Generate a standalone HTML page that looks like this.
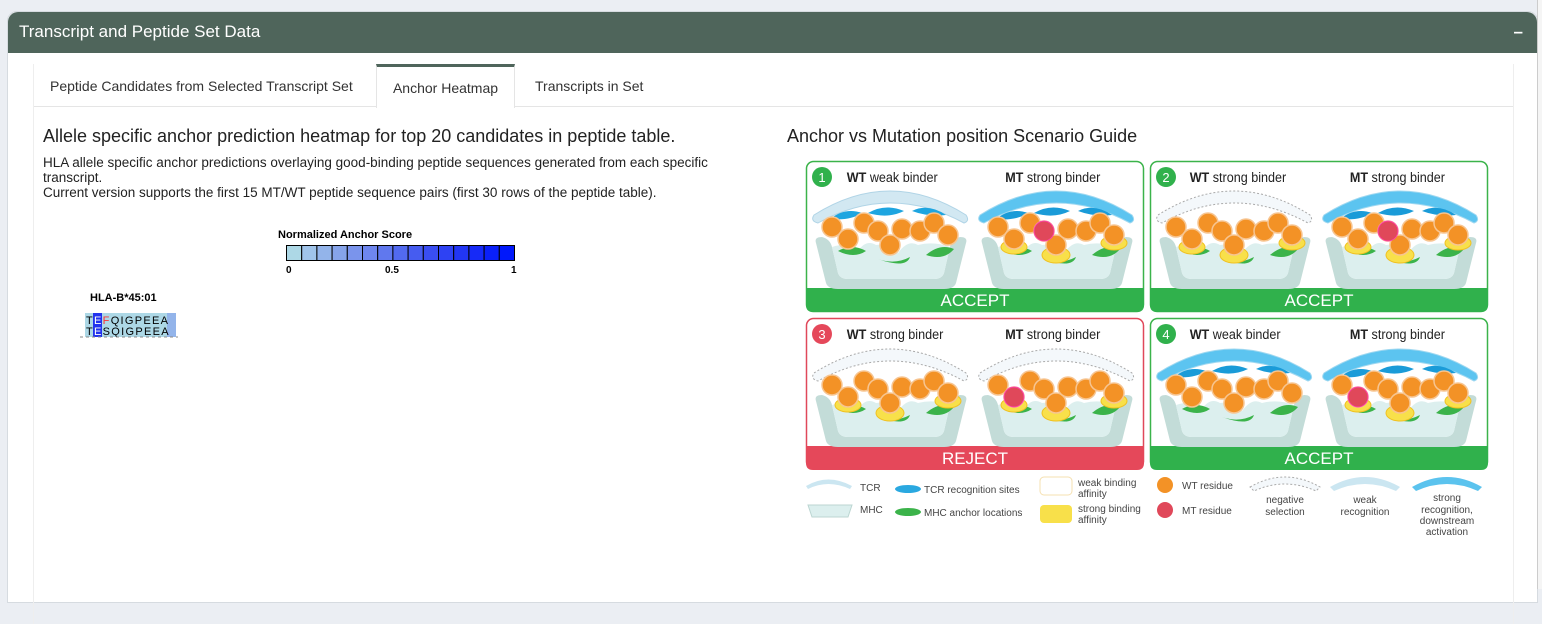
<!DOCTYPE html>
<html><head><meta charset="utf-8"><style>
body{margin:0;width:1542px;height:589px;background:#ebeef3;font-family:"Liberation Sans",sans-serif;overflow:hidden;position:relative}
.box{position:absolute;left:7px;top:11px;width:1529px;height:590px;background:#fff;border-radius:10px 10px 0 0;border:1px solid #d6dbe0}
.hdr{position:absolute;left:0;top:0;right:0;height:41px;background:#4f655b;border-radius:10px 10px 0 0;color:#fff;font-size:17px;line-height:40px;padding-left:11px}
.hdr span{position:absolute;right:14px;top:0;font-weight:bold}
.panel{position:absolute;left:25px;top:52px;width:1479px;height:560px;border-left:1px solid #eee;border-right:1px solid #eee}
.tabs{position:absolute;left:0;top:0;right:0;height:42px;border-bottom:1px solid #e5e5e5}
.tab{position:absolute;top:0;height:42px;line-height:45px;font-size:14px;color:#333}
.act{background:#fff;border:1px solid #e5e5e5;border-top:3px solid #4f655b;border-bottom:none;height:41px;line-height:43px}
</style></head><body>
<div class="box">
<div class="hdr">Transcript and Peptide Set Data<span>–</span></div>
<div class="panel">
<div class="tabs">
<div class="tab" style="left:16px">Peptide Candidates from Selected Transcript Set</div>
<div class="tab act" style="left:342px;width:137px;text-align:center">Anchor Heatmap</div>
<div class="tab" style="left:501px">Transcripts in Set</div>
</div>
</div>
</div>
<div style="position:absolute;left:43px;top:126px;font-size:18px;color:#222">Allele specific anchor prediction heatmap for top 20 candidates in peptide table.</div>
<div style="position:absolute;left:43px;top:155px;font-size:13.5px;color:#222;line-height:15px;width:720px">HLA allele specific anchor predictions overlaying good-binding peptide sequences generated from each specific transcript.<br>Current version supports the first 15 MT/WT peptide sequence pairs (first 30 rows of the peptide table).</div>
<div style="position:absolute;left:787px;top:126px;font-size:18px;color:#222">Anchor vs Mutation position Scenario Guide</div>
<div style="position:absolute;left:278px;top:229px;font-size:11px;font-weight:bold">Normalized Anchor Score</div>
<svg style="position:absolute;left:286px;top:245px" width="232" height="30">
<g stroke="#000" stroke-width="1">
<rect x="0.5" y="0.5" width="15.2" height="15" fill="#add8e6"/><rect x="15.7" y="0.5" width="15.2" height="15" fill="#a0c4ea"/><rect x="30.9" y="0.5" width="15.2" height="15" fill="#93b4ea"/><rect x="46.1" y="0.5" width="15.2" height="15" fill="#86a4ea"/><rect x="61.3" y="0.5" width="15.2" height="15" fill="#7a94ec"/><rect x="76.5" y="0.5" width="15.2" height="15" fill="#6e86ee"/><rect x="91.7" y="0.5" width="15.2" height="15" fill="#6078ee"/><rect x="106.9" y="0.5" width="15.2" height="15" fill="#526aef"/><rect x="122.1" y="0.5" width="15.2" height="15" fill="#465cf0"/><rect x="137.3" y="0.5" width="15.2" height="15" fill="#3a4ef2"/><rect x="152.5" y="0.5" width="15.2" height="15" fill="#2e42f3"/><rect x="167.7" y="0.5" width="15.2" height="15" fill="#2236f5"/><rect x="182.9" y="0.5" width="15.2" height="15" fill="#162af7"/><rect x="198.1" y="0.5" width="15.2" height="15" fill="#0a20f9"/><rect x="213.3" y="0.5" width="15.2" height="15" fill="#0018fb"/></g>
<g font-size="10" font-weight="bold" font-family="Liberation Sans"><text x="0" y="28">0</text><text x="99" y="28">0.5</text><text x="225" y="28">1</text></g></svg>
<div style="position:absolute;left:90px;top:292px;font-size:11px;font-weight:bold">HLA-B*45:01</div>
<svg style="position:absolute;left:78px;top:313px" width="110" height="30" font-family="Liberation Sans" font-size="11">
<rect x="7" y="0" width="91" height="24" fill="#add8e6"/><rect x="15" y="0" width="9" height="24" fill="#2233ee"/><rect x="89" y="0" width="9" height="24" fill="#93b4ea"/>
<text x="8" y="11" letter-spacing="1.3">T<tspan fill="#fff">E</tspan><tspan fill="#f33">F</tspan>QIGPEEA</text>
<text x="8" y="22" letter-spacing="1.3">T<tspan fill="#fff">E</tspan>SQIGPEEA</text>
<line x1="2" y1="24" x2="100" y2="24" stroke="#888" stroke-dasharray="3 3"/></svg>

<svg style="position:absolute;left:800px;top:155px" width="700" height="390" font-family="Liberation Sans">
<defs>
<g id="tray"><path d="M6 58 Q4 52 12 52 Q20 54 22 62 L28 88 Q30 94 38 94 L124 94 Q132 94 134 88 L140 62 Q142 54 150 52 Q158 52 156 58 L146 98 Q144 104 134 104 L28 104 Q18 104 16 98Z" fill="#c3dcd8"/>
<path d="M22 62 Q40 56 48 66 Q56 54 66 60 Q80 58 88 68 Q98 54 108 60 Q124 56 140 62 L134 88 Q132 94 124 94 L38 94 Q30 94 28 88Z" fill="#dcefee"/>
<path d="M28 66 Q42 58 56 66 Q44 74 28 66Z M68 74 Q85 80 100 72 Q96 84 68 74Z M116 70 Q130 58 144 64 Q134 76 116 70Z" fill="#3bb34a"/></g>
<g id="res"><g fill="#f39226" stroke="#f7c591" stroke-width="1.5"><circle cx="22" cy="42" r="10"/><circle cx="38" cy="54" r="10"/><circle cx="54" cy="38" r="10"/><circle cx="68" cy="46" r="10"/><circle cx="80" cy="60" r="10"/><circle cx="92" cy="44" r="10"/><circle cx="110" cy="46" r="10"/><circle cx="124" cy="38" r="10"/><circle cx="138" cy="50" r="10"/></g></g>
<g id="tcrw"><path d="M4 30 Q80 -18 156 30 Q160 36 154 38 Q80 -2 8 38 Q0 36 4 30Z" fill="#d2e8f2" stroke="#b0d4e6"/><path d="M20 34 Q35 22 52 28 Q40 36 20 34Z M58 28 Q75 18 94 26 Q78 34 58 28Z M102 26 Q118 18 136 30 Q118 32 102 26Z" fill="#1ea5e0"/></g>
<g id="tcrs"><path d="M4 30 Q80 -18 156 30 Q160 36 154 38 Q80 -2 8 38 Q0 36 4 30Z" fill="#5cc4f0" stroke="#a0d8f0"/><path d="M20 34 Q35 22 52 28 Q40 36 20 34Z M58 28 Q75 18 94 26 Q78 34 58 28Z M102 26 Q118 18 136 30 Q118 32 102 26Z" fill="#1a9bd8"/></g>
<g id="tcrn"><path d="M4 30 Q80 -18 156 30 Q160 36 154 38 Q80 -2 8 38 Q0 36 4 30Z" fill="#f4f8fb" stroke="#aaa" stroke-dasharray="2 2"/></g>
<g id="sb"><g fill="#f8e04a" stroke="#f0c020"><ellipse cx="38" cy="62" rx="13" ry="7"/><ellipse cx="80" cy="70" rx="14" ry="8"/><ellipse cx="138" cy="58" rx="13" ry="7"/></g></g>
</defs>
<g stroke-width="1.5" fill="none"><rect x="6.5" y="6.5" width="337" height="150" rx="7" stroke="#3bb34a"/><rect x="350.5" y="6.5" width="337" height="150" rx="7" stroke="#3bb34a"/><rect x="6.5" y="163.5" width="337" height="150" rx="7" stroke="#e0485a"/><rect x="350.5" y="163.5" width="337" height="150" rx="7" stroke="#3bb34a"/></g>
<path d="M6 133 H344 V150 Q344 157 337 157 H13 Q6 157 6 150Z" fill="#30b14c"/><path d="M350 133 H688 V150 Q688 157 681 157 H357 Q350 157 350 150Z" fill="#30b14c"/><path d="M6 291 H344 V308 Q344 315 337 315 H13 Q6 315 6 308Z" fill="#e5485a"/><path d="M350 291 H688 V308 Q688 315 681 315 H357 Q350 315 350 308Z" fill="#30b14c"/>
<g fill="#fff" font-size="17" text-anchor="middle"><text x="175" y="151">ACCEPT</text><text x="519" y="151">ACCEPT</text><text x="175" y="309">REJECT</text><text x="519" y="309">ACCEPT</text></g>
<g fill="#30b14c"><circle cx="22" cy="22" r="10"/><circle cx="366" cy="22" r="10"/><circle cx="366" cy="179" r="10"/></g><circle cx="22" cy="179" r="10" fill="#e5485a"/>
<g fill="#fff" font-size="13" text-anchor="middle"><text x="22" y="27">1</text><text x="366" y="27">2</text><text x="22" y="184">3</text><text x="366" y="184">4</text></g>
<g font-size="14" fill="#222" transform="scale(0.9,1)">
<text x="52" y="27"><tspan font-weight="bold">WT</tspan> weak binder</text><text x="228" y="27"><tspan font-weight="bold">MT</tspan> strong binder</text>
<text x="433" y="27"><tspan font-weight="bold">WT</tspan> strong binder</text><text x="611" y="27"><tspan font-weight="bold">MT</tspan> strong binder</text>
<text x="52" y="184"><tspan font-weight="bold">WT</tspan> strong binder</text><text x="228" y="184"><tspan font-weight="bold">MT</tspan> strong binder</text>
<text x="433" y="184"><tspan font-weight="bold">WT</tspan> weak binder</text><text x="611" y="184"><tspan font-weight="bold">MT</tspan> strong binder</text></g>
<g transform="translate(10,30)"><use href="#tray"/><use href="#tcrw"/><use href="#res"/></g>
<g transform="translate(176,30)"><use href="#tray"/><use href="#sb"/><use href="#tcrs"/><use href="#res"/><circle cx="68" cy="46" r="10" fill="#e0485a" stroke="#f4a"/></g>
<g transform="translate(354,30)"><use href="#tray"/><use href="#sb"/><use href="#tcrn"/><use href="#res"/></g>
<g transform="translate(520,30)"><use href="#tray"/><use href="#sb"/><use href="#tcrs"/><use href="#res"/><circle cx="68" cy="46" r="10" fill="#e0485a" stroke="#f4a"/></g>
<g transform="translate(10,188)"><use href="#tray"/><use href="#sb"/><use href="#tcrn"/><use href="#res"/></g>
<g transform="translate(176,188)"><use href="#tray"/><use href="#sb"/><use href="#tcrn"/><use href="#res"/><circle cx="38" cy="54" r="10" fill="#e0485a" stroke="#f4a"/></g>
<g transform="translate(354,188)"><use href="#tray"/><use href="#tcrs"/><use href="#res"/></g>
<g transform="translate(520,188)"><use href="#tray"/><use href="#sb"/><use href="#tcrs"/><use href="#res"/><circle cx="38" cy="54" r="10" fill="#e0485a" stroke="#f4a"/></g>
<g font-size="10" fill="#444">
<path d="M6 331 Q28 318 52 331 L50 334 Q28 324 8 334Z" fill="#cbe6f1"/><text x="60" y="336">TCR</text>
<path d="M8 350 L52 350 L48 362 L12 362Z" fill="#dcefee" stroke="#bcd6d2"/><text x="60" y="358">MHC</text>
<ellipse cx="108" cy="334" rx="13" ry="4" fill="#2aa8e0"/><text x="124" y="338">TCR recognition sites</text>
<ellipse cx="108" cy="357" rx="13" ry="4" fill="#3bb34a"/><text x="124" y="361">MHC anchor locations</text>
<rect x="240" y="322" width="32" height="18" rx="4" fill="#fff" stroke="#f5e0b0"/><text x="278" y="331">weak binding</text><text x="278" y="342">affinity</text>
<rect x="240" y="350" width="32" height="18" rx="4" fill="#f8e04a"/><text x="278" y="357">strong binding</text><text x="278" y="368">affinity</text>
<circle cx="365" cy="330" r="8" fill="#f39226"/><text x="382" y="334">WT residue</text>
<circle cx="365" cy="355" r="8" fill="#e0485a"/><text x="382" y="359">MT residue</text>
<path d="M450 332 Q485 312 520 332 L516 336 Q485 322 454 336Z" fill="#f4f8fb" stroke="#aaa" stroke-dasharray="2 2"/><text x="485" y="348" text-anchor="middle">negative</text><text x="485" y="360" text-anchor="middle">selection</text>
<path d="M530 332 Q565 312 600 332 L596 336 Q565 322 534 336Z" fill="#cbe6f1"/><text x="565" y="348" text-anchor="middle">weak</text><text x="565" y="360" text-anchor="middle">recognition</text>
<path d="M612 332 Q647 312 682 332 L678 336 Q647 322 616 336Z" fill="#5bc3ee"/><text x="647" y="346" text-anchor="middle">strong</text><text x="647" y="358" text-anchor="middle">recognition,</text><text x="647" y="369" text-anchor="middle">downstream</text><text x="647" y="380" text-anchor="middle">activation</text>
</g></svg>
<div style="position:absolute;left:1537px;top:0;width:5px;height:589px;background:#f5f5f5;border-left:1px solid #ccc"></div>
</body></html>
